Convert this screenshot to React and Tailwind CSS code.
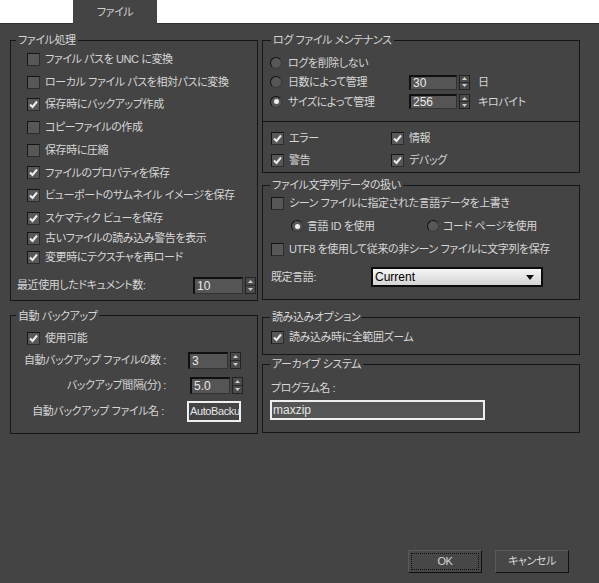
function Check({ checked = false }) {
  return (
    <span className="flex h-[13px] w-[13px] shrink-0 items-center justify-center border-t border-l border-r border-b border-t-[#151515] border-l-[#151515] border-r-[#2c2c2c] border-b-[#2c2c2c] bg-[#575757]">
      {checked && (
        <svg width="11" height="11" viewBox="0 0 11 11">
          <path d="M2 5.5 L4.5 8 L9 2.5" fill="none" stroke="#ededed" strokeWidth="2" />
        </svg>
      )}
    </span>
  );
}

function Radio({ checked = false }) {
  return (
    <span className="flex h-[12px] w-[12px] shrink-0 items-center justify-center rounded-full border border-t-[#101010] border-l-[#101010] border-r-[#3a3a3a] border-b-[#3a3a3a] bg-[#575757]">
      {checked && <span className="h-[5px] w-[5px] rounded-full bg-[#f0f0f0]" />}
    </span>
  );
}

function CheckRow({ label, checked, className = "h-[22px]" }) {
  return (
    <div className={`flex items-center gap-[5px] ${className}`}>
      <Check checked={checked} />
      <span>{label}</span>
    </div>
  );
}

function Arrows({ h = "h-[17px]" }) {
  return (
    <div className={`flex w-[11px] ${h} flex-col border border-[#222] bg-[#4b4b4b]`}>
      <div className="flex flex-1 items-center justify-center border-b border-[#2a2a2a]">
        <svg width="5" height="3" viewBox="0 0 5 3">
          <path d="M0 3 L2.5 0 L5 3 Z" fill="#cfcfcf" />
        </svg>
      </div>
      <div className="flex flex-1 items-center justify-center">
        <svg width="5" height="3" viewBox="0 0 5 3">
          <path d="M0 0 L2.5 3 L5 0 Z" fill="#cfcfcf" />
        </svg>
      </div>
    </div>
  );
}

function Spinner({ value, w, h = "h-[17px]" }) {
  return (
    <div className="flex items-center gap-[2px]">
      <div
        className={`flex ${w} ${h} items-center border-t-2 border-l-2 border-r border-b border-t-[#101010] border-l-[#101010] border-r-[#333] border-b-[#333] bg-[#555] pl-[2px] text-[12px] tracking-normal text-[#e8e8e8]`}
      >
        {value}
      </div>
      <Arrows h={h} />
    </div>
  );
}

function Group({ title, legend = "ml-[5px]", className = "", children }) {
  return (
    <fieldset className={`border border-[#161616] ${className}`}>
      <legend className={`${legend} px-[2px] leading-[14px]`}>{title}</legend>
      {children}
    </fieldset>
  );
}

function Button({ children, focus = false }) {
  return (
    <div className="flex h-[23px] w-[74px] items-center justify-center border border-t-[#5a5a5a] border-l-[#5a5a5a] border-r-[#111] border-b-[#111] bg-[#474747] p-[2px]">
      <div
        className={`flex h-full w-full items-center justify-center ${focus ? "border border-dotted border-[#111]" : ""}`}
      >
        {children}
      </div>
    </div>
  );
}

export default function App() {
  return (
    <div className="min-h-[583px] w-[599px] bg-[#444] text-[11px] tracking-[-0.4px] text-[#d6d6d6] [font-family:'Liberation_Sans','Noto_Sans_CJK_JP',sans-serif] [font-feature-settings:'palt']">
      <div className="flex h-[24px]">
        <div className="w-[73px] border-b border-[#2e2e2e] bg-white" />
        <div className="flex w-[84px] items-center justify-center bg-[#444] text-[#d0d0d0]">ファイル</div>
        <div className="flex-1 border-b border-[#2e2e2e] bg-white" />
      </div>

      <div className="flex items-start gap-[4px] pl-[10px] pt-[9px]">
        {/* left column */}
        <div className="w-[248px]">
          <Group title="ファイル処理">
            <div className="pl-[16px] pt-[1px]">
              <CheckRow className="h-[22.7px]" label="ファイル パスを UNC に変換" />
              <CheckRow className="h-[22.7px]" label="ローカル ファイル パスを相対パスに変換" />
              <CheckRow className="h-[22.7px]" label="保存時にバックアップ作成" checked />
              <CheckRow className="h-[22.7px]" label="コピーファイルの作成" />
              <CheckRow className="h-[22.7px]" label="保存時に圧縮" />
              <CheckRow className="h-[22.7px]" label="ファイルのプロパティを保存" checked />
              <CheckRow className="h-[22.7px]" label="ビューポートのサムネイル イメージを保存" checked />
              <CheckRow className="h-[22.7px]" label="スケマティク ビューを保存" checked />
              <CheckRow className="h-[17px]" label="古いファイルの読み込み警告を表示" checked />
              <CheckRow className="h-[21px]" label="変更時にテクスチャを再ロード" checked />
            </div>
            <div className="mt-[7px] flex h-[22px] items-center pl-[6px] pr-[1px]">
              <span className="flex-1">最近使用したドキュメント数:</span>
              <Spinner value="10" w="w-[50px]" />
            </div>
            <div className="h-[3px]" />
          </Group>

          <Group title="自動 バックアップ" className="mt-[8px]">
            <div className="pl-[16px] pt-[5px]">
              <CheckRow label="使用可能" checked />
            </div>
            <div className="flex h-[21px] items-center">
              <span className="w-[155px] text-right">自動バックアップ ファイルの数 :</span>
              <div className="ml-[22px]">
                <Spinner value="3" w="w-[40px]" />
              </div>
            </div>
            <div className="flex h-[30px] items-center">
              <span className="w-[155px] text-right">バックアップ間隔(分) :</span>
              <div className="ml-[24px]">
                <Spinner value="5.0" w="w-[40px]" />
              </div>
            </div>
            <div className="flex h-[22px] items-center">
              <span className="w-[153px] text-right">自動バックアップ ファイル名 :</span>
              <div className="ml-[23px] flex h-[21px] w-[54px] items-center overflow-hidden whitespace-nowrap border-2 border-[#efefef] bg-[#444] pl-[1px] text-[#e6e6e6]">
                AutoBacku
              </div>
            </div>
            <div className="h-[10px]" />
          </Group>
        </div>

        {/* right column */}
        <div className="w-[318px]">
          <Group title="ログ ファイル メンテナンス" legend="ml-[8px]">
            <div className="pb-[9.5px] pl-[7px] pt-[6px]">
              <div className="flex h-[19.5px] items-center">
                <Radio />
                <span className="ml-[6px]">ログを削除しない</span>
              </div>
              <div className="flex h-[19.5px] items-center">
                <Radio />
                <span className="ml-[6px] w-[121px]">日数によって管理</span>
                <Spinner value="30" w="w-[48px]" h="h-[15px]" />
                <span className="ml-[8px]">日</span>
              </div>
              <div className="flex h-[19.5px] items-center">
                <Radio checked />
                <span className="ml-[6px] w-[121px]">サイズによって管理</span>
                <Spinner value="256" w="w-[48px]" h="h-[15px]" />
                <span className="ml-[8px]">キロバイト</span>
              </div>
            </div>
            <div className="grid grid-cols-[120px_1fr] border-t border-[#161616] pb-[1px] pl-[8px] pt-[5px]">
              <CheckRow label="エラー" checked />
              <CheckRow label="情報" checked />
              <CheckRow label="警告" checked />
              <CheckRow label="デバッグ" checked />
            </div>
          </Group>

          <Group title="ファイル文字列データの扱い" legend="ml-[7px]" className="mt-[5px]">
            <div className="pl-[8px]">
              <CheckRow label="シーン ファイルに指定された言語データを上書き" />
            </div>
            <div className="grid h-[24px] grid-cols-[136px_1fr] items-center pl-[28px]">
              <div className="flex items-center gap-[4px]">
                <Radio checked />
                <span>言語 ID を使用</span>
              </div>
              <div className="flex items-center gap-[4px]">
                <Radio />
                <span>コード ページを使用</span>
              </div>
            </div>
            <div className="pl-[8px]">
              <CheckRow className="h-[23px]" label="UTF8 を使用して従来の非シーン ファイルに文字列を保存" />
            </div>
            <div className="flex items-center pb-[12px] pl-[8px] pt-[6px]">
              <span className="w-[100px]">既定言語:</span>
              <div className="flex h-[20px] w-[172px] items-center justify-between border-2 border-[#0c0c0c] bg-gradient-to-b from-[#f6f6f6] to-[#d4d4d4] pl-[2px] pr-[7px] text-[12px] tracking-normal text-black">
                <span>Current</span>
                <svg width="8" height="5" viewBox="0 0 8 5">
                  <path d="M0 0 L8 0 L4 5 Z" fill="#111" />
                </svg>
              </div>
            </div>
          </Group>

          <Group title="読み込みオプション" legend="ml-[7px]" className="mt-[10px]">
            <div className="pb-[6px] pl-[8px] pt-[2px]">
              <CheckRow label="読み込み時に全範囲ズーム" checked />
            </div>
          </Group>

          <Group title="アーカイブ システム" legend="ml-[7px]" className="mt-[2px]">
            <div className="mt-[10px] flex h-[14px] items-center pl-[8px]">プログラム名 :</div>
            <div className="ml-[7px] mt-[5px] flex h-[20px] w-[215px] items-center border-2 border-[#efefef] bg-[#555] pl-[1px] text-[12px] tracking-normal text-[#e6e6e6]">
              maxzip
            </div>
            <div className="h-[12px]" />
          </Group>
        </div>
      </div>

      <div className="mt-[116px] flex justify-end gap-[13px] pr-[30px]">
        <Button focus>OK</Button>
        <Button>キャンセル</Button>
      </div>
    </div>
  );
}
